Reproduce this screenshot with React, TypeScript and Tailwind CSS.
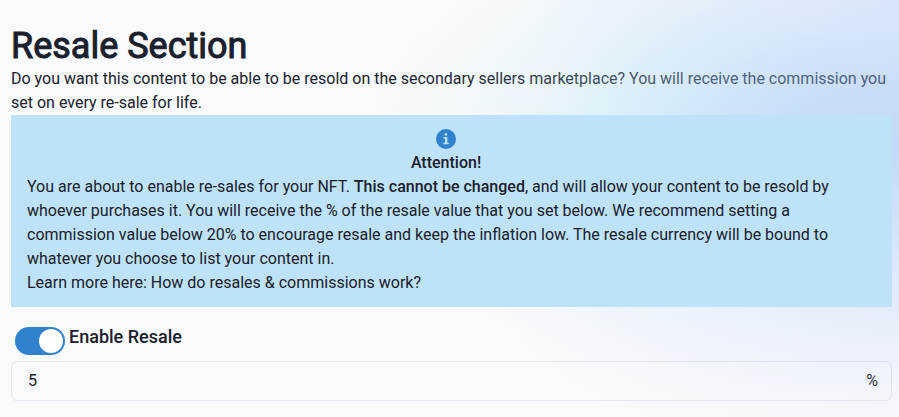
import { useState } from 'react';

interface ResaleSwitchProps {
    checked: boolean;
    onChange: (checked: boolean) => void;
}

const InfoIcon = () => (
    <svg viewBox="0 0 24 24" className="h-6 w-6 p-[2px]" aria-hidden="true">
        <circle cx="12" cy="12" r="12" fill="#3182ce" />
        <path
            d="M10.4 5.2h3v2.6h-3zM9 9.6h4.6v6.9h1.7v1.7H8.8v-1.7h2v-5.2H9z"
            fill="#bee3f8"
        />
    </svg>
);

const ResaleSwitch = ({ checked, onChange }: ResaleSwitchProps) => (
    <div className="flex items-start px-1 pt-5 pb-[6px]">
        <input
            id="enable-resale"
            type="checkbox"
            role="switch"
            checked={checked}
            onChange={(e) => onChange(e.target.checked)}
            className="flex h-7 w-[50px] shrink-0 cursor-pointer appearance-none items-center rounded-full bg-[#cbd5e0] p-[2px] before:h-6 before:w-6 before:rounded-full before:bg-white checked:justify-end checked:bg-[#3182ce]"
        />
        <label
            htmlFor="enable-resale"
            className="pl-1 text-lg leading-5 font-medium"
        >
            Enable Resale
        </label>
    </div>
);

const App = () => {
    const [enabled, setEnabled] = useState(true);
    const [commission, setCommission] = useState('5');

    return (
        <div className="relative min-h-screen bg-[#f8fafc] font-[Roboto,sans-serif] text-base text-[#1a202c]">
            {/* soft glow that tints everything except the alert */}
            <div className="pointer-events-none absolute inset-0 z-10 bg-[radial-gradient(ellipse_60%_62%_at_100%_36%,rgba(125,175,242,0.4),rgba(135,185,243,0.35)_25%,rgba(150,205,245,0.22)_48%,rgba(170,220,238,0.12)_68%,transparent),radial-gradient(ellipse_24%_46%_at_74%_34%,rgba(170,232,240,0.2),transparent),radial-gradient(ellipse_42%_50%_at_100%_0%,rgba(160,165,245,0.2),transparent),radial-gradient(ellipse_44%_34%_at_100%_74%,rgba(190,180,250,0.14),transparent)]" />

            <main className="pt-[25px] pr-[7px] pb-4 pl-[11px]">
                <h1 className="text-4xl leading-[42px] [-webkit-text-stroke:1px]">
                    Resale Section
                </h1>
                <p>
                    Do you want this content to be able to be resold on the
                    secondary sellers marketplace? You will receive the
                    commission you set on every re-sale for life.
                </p>

                <section
                    role="alert"
                    className="relative z-20 bg-[#bee3f8] py-3 pr-[27px] pl-4"
                >
                    <div className="flex flex-col items-center">
                        <InfoIcon />
                        <h2 className="font-medium">Attention!</h2>
                    </div>
                    <p>
                        You are about to enable re-sales for your NFT.{' '}
                        <strong className="font-medium">
                            This cannot be changed
                        </strong>
                        , and will allow your content to be resold by whoever
                        purchases it. You will receive the % of the resale value
                        that you set below. We recommend setting a commission
                        value below 20% to encourage resale and keep the
                        inflation low. The resale currency will be bound to
                        whatever you choose to list your content in.
                    </p>
                    <p>
                        Learn more here:{' '}
                        <a href="#resales">
                            How do resales &amp; commissions work?
                        </a>
                    </p>
                </section>

                <ResaleSwitch checked={enabled} onChange={setEnabled} />

                <div className="flex h-10 items-center rounded-md border border-[#e2e8f0] pr-[13px] pl-4">
                    <input
                        aria-label="Resale commission"
                        inputMode="numeric"
                        value={commission}
                        onChange={(e) => setCommission(e.target.value)}
                        className="h-6 min-w-0 flex-1 bg-transparent outline-none"
                    />
                    <span>%</span>
                </div>
            </main>
        </div>
    );
};

export default App;
